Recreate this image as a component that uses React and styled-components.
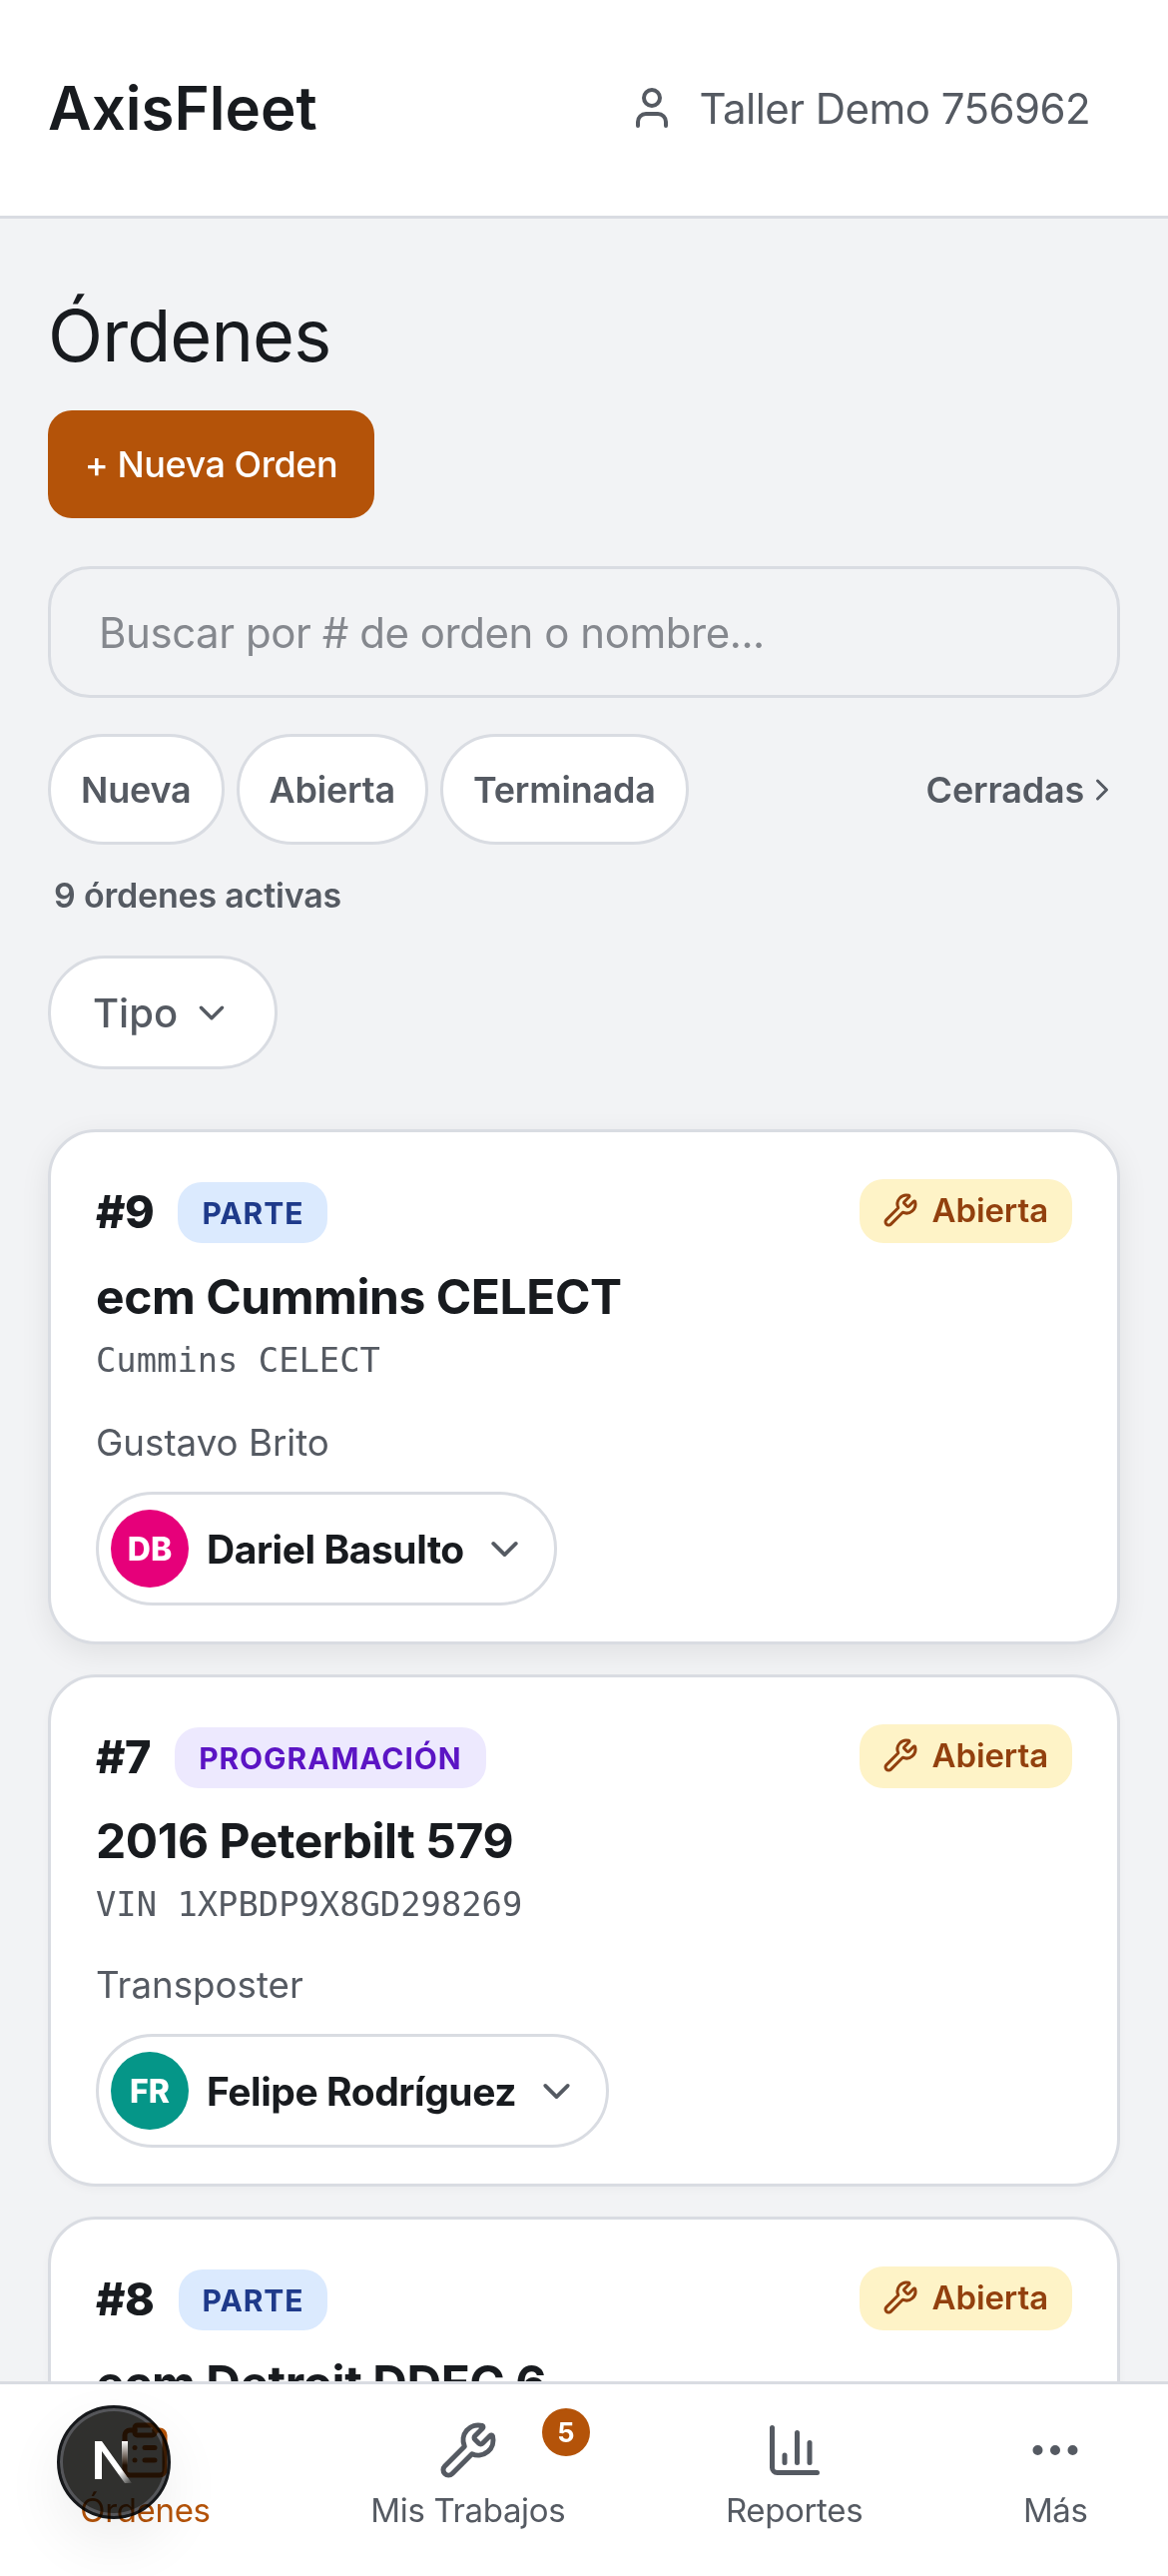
import React from 'react';
import styled, { createGlobalStyle } from 'styled-components';
import { User, Wrench, ClipboardList, ChartColumn, Ellipsis, ChevronDown, ChevronRight } from 'lucide-react';

const GlobalStyle = createGlobalStyle`
  * { box-sizing: border-box; }
  html, body { margin: 0; padding: 0; height: 100%; overflow: hidden; }
  body { background: #f2f3f5; font-family: Inter, "Liberation Sans", sans-serif; color: #181b1f; }
`;

const Page = styled.div`
  width: 1170px;
  height: 2580px;
  overflow: hidden;
  position: relative;
`;

const Header = styled.header`
  height: 219px;
  background: #fff;
  border-bottom: 3px solid #d9dce2;
  display: flex;
  align-items: center;
  justify-content: space-between;
  padding: 0 48px;
`;

const Brand = styled.div`
  font-size: 60px;
  font-weight: 600;
  color: #181b1f;
`;

const Account = styled.div`
  display: flex;
  align-items: center;
  gap: 24px;
  padding-right: 30px;
  font-size: 42px;
  letter-spacing: -0.55px;
  color: #555a62;
`;

const Main = styled.main`
  padding: 48px 48px 0;
`;

const Title = styled.h1`
  margin: 21px 0 27px;
  font-size: 72px;
  line-height: 96px;
  font-weight: 400;
  letter-spacing: -0.9px;
  color: #181b1f;
`;

const NewButton = styled.button`
  display: block;
  width: 327px;
  height: 108px;
  border: 0;
  border-radius: 24px;
  background: #b45309;
  color: #fff;
  font: 500 36px Inter, sans-serif;
  letter-spacing: -0.45px;
`;

const Search = styled.div`
  margin-top: 48px;
  height: 132px;
  border: 3px solid #d9dce2;
  border-radius: 42px;
  background: #f2f3f5;
  display: flex;
  align-items: center;
  padding: 0 48px;
  font-size: 42px;
  letter-spacing: -0.45px;
  color: #85888e;
`;

const FilterRow = styled.div`
  margin-top: 36px;
  display: flex;
  align-items: center;
  gap: 12px;
`;

const Chip = styled.div`
  height: 111px;
  padding: 0 30px;
  border: 3px solid #d9dce2;
  border-radius: 56px;
  background: #fff;
  display: flex;
  align-items: center;
  font-size: 36px;
  font-weight: 600;
  letter-spacing: -0.2px;
  color: #555a62;
`;

const ClosedLink = styled.div`
  margin-left: auto;
  display: flex;
  align-items: center;
  font-size: 36px;
  font-weight: 600;
  letter-spacing: -0.2px;
  color: #555a62;
`;

const Count = styled.div`
  margin: 27px 0 0 6px;
  font-size: 34px;
  line-height: 48px;
  font-weight: 600;
  letter-spacing: -0.2px;
  color: #555a62;
`;

const TypeSelect = styled.div`
  margin-top: 36px;
  width: 230px;
  height: 114px;
  border: 3px solid #d9dce2;
  border-radius: 57px;
  background: #fff;
  display: flex;
  align-items: center;
  gap: 13px;
  padding: 0 42px;
  font-size: 40px;
  font-weight: 500;
  color: #555a62;
`;

const CardList = styled.div`
  margin-top: 60px;
  display: flex;
  flex-direction: column;
  gap: 30px;
`;

const Card = styled.article`
  background: #fff;
  border: 3px solid #d9dce2;
  border-radius: 48px;
  padding: 47px 45px 36px;
  box-shadow: ${p => (p.$raised ? '0 9px 30px rgba(0, 0, 0, 0.08)' : '0 3px 9px rgba(0, 0, 0, 0.03)')};
`;

const CardTop = styled.div`
  display: flex;
  align-items: center;
  justify-content: space-between;
`;

const CardIdent = styled.div`
  display: flex;
  align-items: center;
  gap: 24px;
`;

const OrderNo = styled.span`
  font-size: 45px;
  font-weight: 800;
  letter-spacing: -0.4px;
  color: #181b1f;
`;

const TypeBadge = styled.span`
  height: 61px;
  margin-top: 2px;
  border-radius: 24px;
  padding: 2px 24px 0;
  display: flex;
  align-items: center;
  font-size: 30px;
  font-weight: 700;
  letter-spacing: 0.9px;
  background: ${p => p.$bg};
  color: ${p => p.$fg};
`;

const StatusBadge = styled.span`
  height: 64px;
  border-radius: 24px;
  padding: 0 24px 2px 23px;
  display: flex;
  align-items: center;
  gap: 13px;
  background: #fef3c7;
  color: #92400e;
  font-size: 33px;
  font-weight: 600;
  letter-spacing: -0.1px;
`;

const CardTitle = styled.h2`
  margin: ${p => p.$gap}px 0 0;
  font-size: 48px;
  line-height: 66px;
  font-weight: 700;
  letter-spacing: -0.45px;
  color: #181b1f;
`;

const Code = styled.div`
  margin-top: 7px;
  font-family: "DejaVu Sans Mono", "Liberation Mono", monospace;
  font-size: 33.8px;
  line-height: 48px;
  color: #555a62;
`;

const Customer = styled.div`
  margin-top: ${p => p.$gap}px;
  font-size: 36.7px;
  line-height: 54px;
  color: #555a62;
`;

const Assignee = styled.div`
  margin-top: 22px;
  display: flex;
  width: fit-content;
  align-items: center;
  height: 114px;
  padding: 0 27px 0 12px;
  border: 3px solid #d9dce2;
  border-radius: 57px;
  gap: 18px;
  font-size: 39px;
  font-weight: 700;
  letter-spacing: -0.45px;
  color: #181b1f;
`;

const Avatar = styled.span`
  width: 78px;
  height: 78px;
  border-radius: 50%;
  display: flex;
  align-items: center;
  justify-content: center;
  background: ${p => p.$bg};
  color: #fff;
  font-size: 32px;
  font-weight: 800;
  letter-spacing: 0;
`;

const BottomNav = styled.nav`
  position: absolute;
  left: 0;
  right: 0;
  bottom: 0;
  height: 195px;
  background: #fff;
  border-top: 3px solid #d9dce2;
  display: flex;
  justify-content: space-around;
`;

const NavItem = styled.div`
  display: flex;
  flex-direction: column;
  align-items: center;
  padding-top: 36px;
  gap: 8px;
  font-size: 33px;
  line-height: 45px;
  letter-spacing: -0.35px;
  position: relative;
  color: ${p => (p.$active ? '#b45309' : '#555a62')};
`;

const NavCount = styled.span`
  position: absolute;
  top: 24px;
  left: 50%;
  margin-left: 74px;
  width: 48px;
  height: 48px;
  border-radius: 50%;
  background: #b45309;
  color: #fff;
  font-size: 27px;
  font-weight: 700;
  display: flex;
  align-items: center;
  justify-content: center;
`;

const DevBadge = styled.div`
  position: absolute;
  left: 57px;
  bottom: 57px;
  width: 114px;
  height: 114px;
  border-radius: 50%;
  box-shadow: 0 24px 60px rgba(0, 0, 0, 0.07);
  display: flex;
  align-items: center;
  justify-content: center;

  /* multiply so the nav item under it shows through dark, as in the dev overlay */
  &::before {
    content: '';
    position: absolute;
    inset: 0;
    border-radius: 50%;
    background: #30302e;
    border: 3px solid #16181b;
    box-shadow: inset 0 0 0 3px #55565a;
    mix-blend-mode: multiply;
  }

  svg {
    position: relative;
  }
`;

const orders = [
  { no: '#9', type: 'PARTE', bg: '#dbeafe', fg: '#1e3a8a', title: 'ecm Cummins CELECT', code: 'Cummins CELECT', customer: 'Gustavo Brito', initials: 'DB', color: '#e6007a', who: 'Dariel Basulto', raised: true, titleGap: 21, customerGap: 31 },
  { no: '#7', type: 'PROGRAMACIÓN', bg: '#ede9fe', fg: '#5b14c4', title: '2016 Peterbilt 579', code: 'VIN 1XPBDP9X8GD298269', customer: 'Transposter', initials: 'FR', color: '#059688', who: 'Felipe Rodríguez', titleGap: 20, customerGap: 29 },
  { no: '#8', type: 'PARTE', bg: '#dbeafe', fg: '#1e3a8a', title: 'ecm Detroit DDEC 6', code: 'Detroit DDEC 6', customer: 'Gustavo Brito', initials: 'DB', color: '#e6007a', who: 'Dariel Basulto', titleGap: 20, customerGap: 29 },
];

const App = () => (
  <Page>
    <GlobalStyle />
    <Header>
      <Brand>AxisFleet</Brand>
      <Account>
        <User size={48} strokeWidth={2} />
        Taller Demo 756962
      </Account>
    </Header>
    <Main>
      <Title>Órdenes</Title>
      <NewButton>+ Nueva Orden</NewButton>
      <Search>Buscar por # de orden o nombre...</Search>
      <FilterRow>
        <Chip>Nueva</Chip>
        <Chip>Abierta</Chip>
        <Chip>Terminada</Chip>
        <ClosedLink>Cerradas <ChevronRight size={36} /></ClosedLink>
      </FilterRow>
      <Count>9 órdenes activas</Count>
      <TypeSelect>Tipo <ChevronDown size={45} /></TypeSelect>
      <CardList>
        {orders.map(o => (
          <Card key={o.no} $raised={o.raised}>
            <CardTop>
              <CardIdent>
                <OrderNo>{o.no}</OrderNo>
                <TypeBadge $bg={o.bg} $fg={o.fg}>{o.type}</TypeBadge>
              </CardIdent>
              <StatusBadge><Wrench size={36} />Abierta</StatusBadge>
            </CardTop>
            <CardTitle $gap={o.titleGap}>{o.title}</CardTitle>
            <Code>{o.code}</Code>
            <Customer $gap={o.customerGap}>{o.customer}</Customer>
            <Assignee>
              <Avatar $bg={o.color}>{o.initials}</Avatar>
              {o.who}
              <ChevronDown size={45} color="#555a62" />
            </Assignee>
          </Card>
        ))}
      </CardList>
    </Main>
    <BottomNav>
      <NavItem $active><ClipboardList size={60} />Órdenes</NavItem>
      <NavItem><Wrench size={60} />Mis Trabajos<NavCount>5</NavCount></NavItem>
      <NavItem><ChartColumn size={60} />Reportes</NavItem>
      <NavItem><Ellipsis size={60} />Más</NavItem>
    </BottomNav>
    <DevBadge>
      <svg width="54" height="54" viewBox="0 0 54 54" fill="none">
        <defs>
          <linearGradient id="nFade" x1="18" y1="22" x2="44" y2="50" gradientUnits="userSpaceOnUse">
            <stop offset="0.55" stopColor="#fff" />
            <stop offset="1" stopColor="#fff" stopOpacity="0" />
          </linearGradient>
          <linearGradient id="nBar" x1="38" y1="6" x2="38" y2="30" gradientUnits="userSpaceOnUse">
            <stop stopColor="#fff" />
            <stop offset="1" stopColor="#fff" stopOpacity="0" />
          </linearGradient>
        </defs>
        <path d="M8 6h7l30 42h-7L15 16v28H8z" fill="url(#nFade)" />
        <rect x="35" y="6" width="6" height="24" fill="url(#nBar)" />
      </svg>
    </DevBadge>
  </Page>
);

export default App;
